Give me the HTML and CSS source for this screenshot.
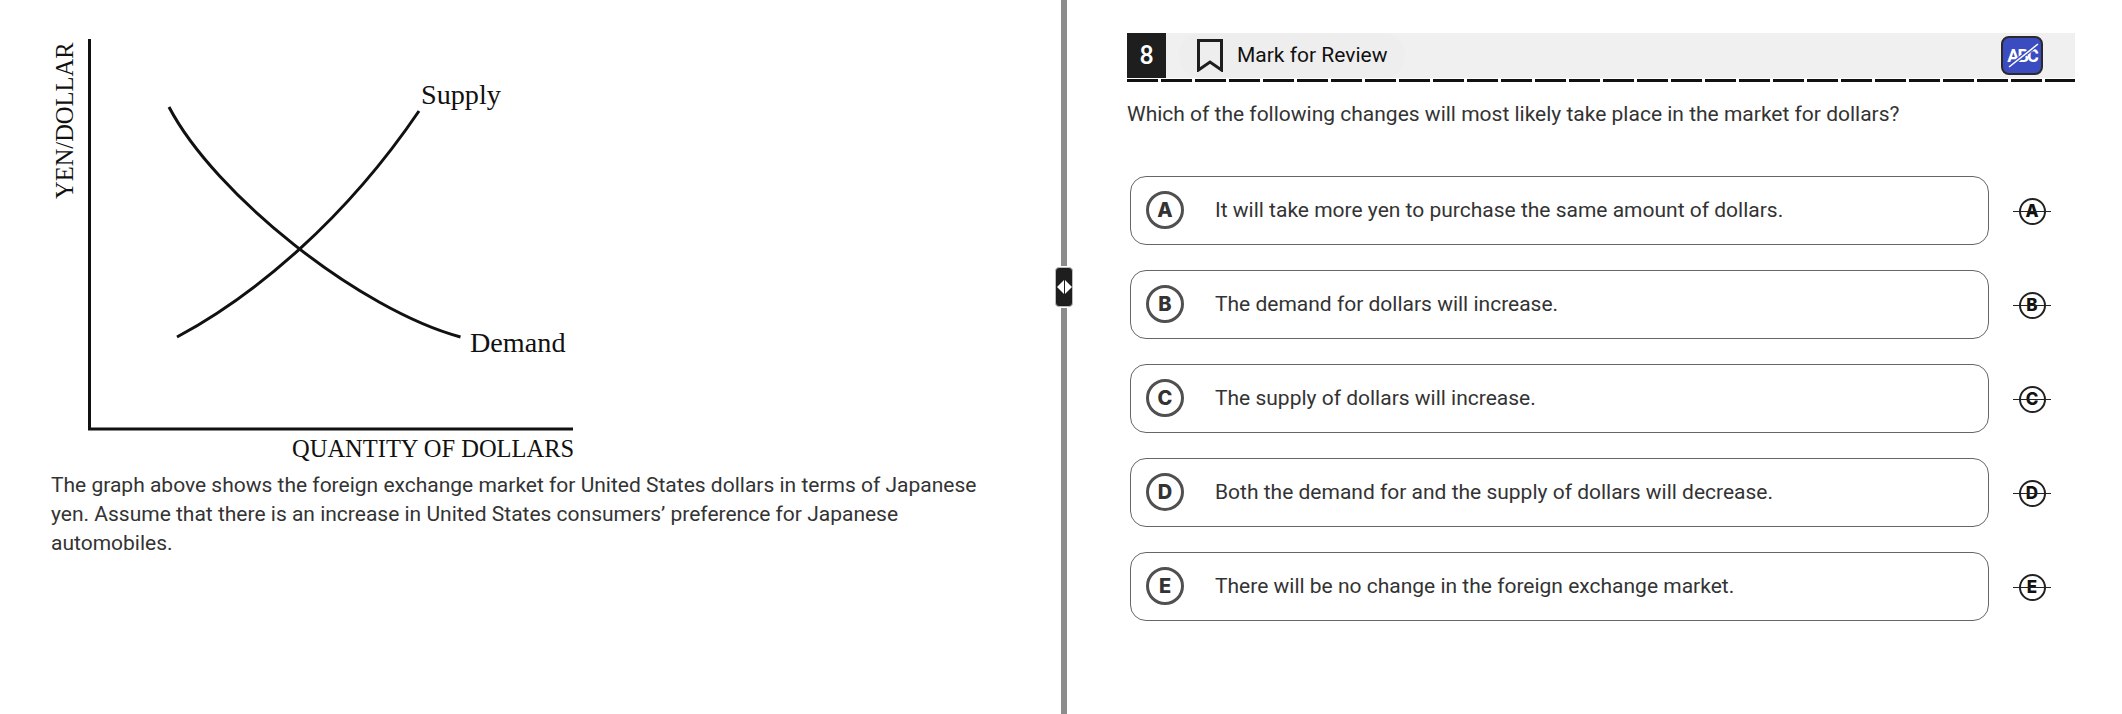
FILE: index.html
```html
<!DOCTYPE html>
<html lang="en">
<head>
    <meta charset="UTF-8">
    <title>Question 8</title>
    <link rel="stylesheet" href="styles.css">
</head>
<body>
    <div class="passage-pane">
        <!-- Supply and demand graph -->
        <svg class="graph" width="640" height="466" viewBox="0 0 640 466">
            <path class="graph-axis" d="M89.5 39V429H573"/>
            <path class="graph-curve" d="M169 107C215 195 360 310 460.5 337"/>
            <path class="graph-curve" d="M177 337C255 295 345 220 419 111"/>
            <text class="graph-label" x="421" y="104">Supply</text>
            <text class="graph-label" x="470" y="352">Demand</text>
            <text class="graph-label graph-label-small" x="292" y="457">QUANTITY OF DOLLARS</text>
            <text class="graph-label graph-label-small" transform="translate(73 199) rotate(-90)">YEN/DOLLAR</text>
        </svg>
        <p class="passage-text">The graph above shows the foreign exchange market for United States dollars in terms of Japanese yen. Assume that there is an increase in United States consumers’ preference for Japanese automobiles.</p>
    </div>

    <div class="divider">
        <div class="divider-handle">
            <span class="arrow-left"></span>
            <span class="arrow-right"></span>
        </div>
    </div>

    <div class="question-pane">
        <div class="question-header">
            <div class="question-number">8</div>
            <div class="mark-review">
                <svg width="26" height="33" viewBox="0 0 26 33">
                    <path d="M1.5 1.5H24.5V31L13 23L1.5 31Z" fill="none" stroke="#1e1e1e" stroke-width="3"/>
                </svg>
                <span class="mark-label">Mark for Review</span>
            </div>
            <button class="abc-button">
                <span>ABC</span>
                <svg class="abc-slash" width="41" height="39" viewBox="0 0 41 39">
                    <path d="M7 31L36 8" stroke="#3a4cc0" stroke-width="4"/>
                    <path d="M7 31L36 8" stroke="#fff" stroke-width="1.5"/>
                </svg>
            </button>
        </div>
        <div class="header-rule"></div>

        <p class="question-text">Which of the following changes will most likely take place in the market for dollars?</p>

        <div class="options">
            <div class="option-row">
                <div class="option-card">
                    <span class="option-letter">A</span>
                    <span>It will take more yen to purchase the same amount of dollars.</span>
                </div>
                <div class="strike"><span class="strike-letter">A</span></div>
            </div>
            <div class="option-row">
                <div class="option-card">
                    <span class="option-letter">B</span>
                    <span>The demand for dollars will increase.</span>
                </div>
                <div class="strike"><span class="strike-letter">B</span></div>
            </div>
            <div class="option-row">
                <div class="option-card">
                    <span class="option-letter">C</span>
                    <span>The supply of dollars will increase.</span>
                </div>
                <div class="strike"><span class="strike-letter">C</span></div>
            </div>
            <div class="option-row">
                <div class="option-card">
                    <span class="option-letter">D</span>
                    <span>Both the demand for and the supply of dollars will decrease.</span>
                </div>
                <div class="strike"><span class="strike-letter">D</span></div>
            </div>
            <div class="option-row">
                <div class="option-card">
                    <span class="option-letter">E</span>
                    <span>There will be no change in the foreign exchange market.</span>
                </div>
                <div class="strike"><span class="strike-letter">E</span></div>
            </div>
        </div>
    </div>
</body>
</html>
```

FILE: styles.css
```css
* {
    margin: 0;
    padding: 0;
    box-sizing: border-box;
    font-family: 'Roboto', sans-serif;
}

body {
    display: flex;
    height: 714px;
    overflow: hidden;
    background-color: #fff;
    color: #333;
    font-size: 21px;
}

/* Left pane */
.passage-pane {
    width: 1061px;
    flex-shrink: 0;
    padding-left: 51px;
}

.graph {
    display: block;
    margin-left: -51px;
}

.graph-axis {
    fill: none;
    stroke: #111;
    stroke-width: 3;
}

.graph-curve {
    fill: none;
    stroke: #111;
    stroke-width: 3;
}

.graph-label {
    font-family: 'Liberation Serif', serif;
    font-size: 28.2px;
    fill: #111;
}

.graph-label-small {
    font-size: 24.5px;
}

.passage-text {
    width: 940px;
    margin-top: 5px;
    line-height: 29px;
}

/* Splitter */
.divider {
    position: relative;
    width: 6px;
    flex-shrink: 0;
    background-color: #8c8c8c;
}

.divider-handle {
    position: absolute;
    top: 267px;
    left: -6px;
    width: 18px;
    height: 40px;
    display: flex;
    align-items: center;
    justify-content: center;
    gap: 1px;
    background-color: #1e1e1e;
    border-radius: 4px;
    border: 1px solid #bbb;
    box-shadow: 0 0 0 1px #fff;
}

.arrow-left {
    border-top: 7px solid transparent;
    border-bottom: 7px solid transparent;
    border-right: 7px solid #fff;
}

.arrow-right {
    border-top: 7px solid transparent;
    border-bottom: 7px solid transparent;
    border-left: 7px solid #fff;
}

/* Right pane */
.question-pane {
    flex: 1;
    padding: 33px 47px 0 60px;
}

.question-header {
    display: flex;
    align-items: center;
    height: 45px;
    background-color: #f0f0f0;
}

.question-number {
    width: 39px;
    height: 45px;
    display: flex;
    align-items: center;
    justify-content: center;
    padding-bottom: 1px;
    background-color: #1e1e1e;
    color: #fff;
    font-size: 25px;
    font-weight: 500;
}

.mark-review {
    display: flex;
    align-items: center;
    gap: 14px;
    height: 45px;
    margin-left: 13px;
    padding: 0 18px;
    background-color: #eee;
    border-radius: 22px;
    color: #111;
}

.mark-label {
    margin-bottom: 2px;
}

.abc-button {
    position: relative;
    width: 42px;
    height: 39px;
    margin-left: auto;
    margin-right: 32px;
    display: flex;
    align-items: center;
    justify-content: center;
    background-color: #3a4cc0;
    border: 2px solid #2a2a2a;
    border-radius: 8px;
    color: #fff;
    font-size: 18px;
    font-weight: 700;
    letter-spacing: -2px;
}

.abc-slash {
    position: absolute;
    top: -2px;
    left: -1px;
}

.header-rule {
    height: 3px;
    margin-top: 1px;
    background-image: repeating-linear-gradient(to right, #111 0, #111 31px, transparent 31px, transparent 34px);
}

.question-text {
    margin-top: 18px;
    line-height: 29px;
}

.options {
    display: flex;
    flex-direction: column;
    gap: 25px;
    margin-top: 47px;
    padding-left: 3px;
}

.option-row {
    display: flex;
    align-items: center;
}

.option-card {
    flex: 1;
    height: 69px;
    display: flex;
    align-items: center;
    gap: 31px;
    padding-left: 15px;
    padding-bottom: 2px;
    border: 1px solid #666;
    border-radius: 16px;
}

.option-letter {
    width: 38px;
    height: 38px;
    display: flex;
    align-items: center;
    justify-content: center;
    flex-shrink: 0;
    border: 3px solid #505050;
    border-radius: 50%;
    font-family: 'Inter', sans-serif;
    font-size: 20px;
    font-weight: 800;
    color: #333;
}

.strike {
    position: relative;
    width: 38px;
    height: 27px;
    margin: 1px 24px 0;
    display: flex;
    justify-content: center;
}

.strike::after {
    content: "";
    position: absolute;
    top: 13px;
    left: 0;
    right: 0;
    height: 1.5px;
    background-color: #222;
}

.strike-letter {
    width: 27px;
    height: 27px;
    display: flex;
    align-items: center;
    justify-content: center;
    border: 2px solid #222;
    border-radius: 50%;
    font-family: 'Inter', sans-serif;
    font-size: 17px;
    font-weight: 800;
    color: #111;
}
```
